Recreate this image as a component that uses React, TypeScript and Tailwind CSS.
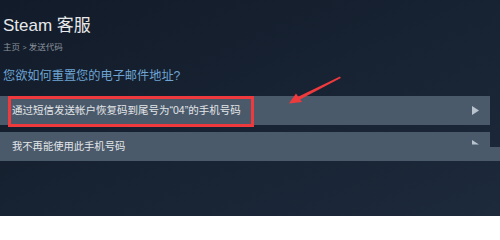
import React from 'react';

const font = "font-['Liberation_Sans','Noto_Sans_CJK_SC',sans-serif]";

function Triangle({ half = false }: { half?: boolean }) {
  return (
    <svg width="7" height="9" viewBox="0 0 7 9" className="shrink-0">
      {half ? (
        <polygon points="0,0 7,4.5 0,4.5" fill="#b9c3ce" />
      ) : (
        <polygon points="0,0 7,4.5 0,9" fill="#b9c3ce" />
      )}
    </svg>
  );
}

export default function App() {
  return (
    <div
      className={`relative w-[500px] h-[216px] overflow-hidden bg-gradient-to-br from-[#121b29] via-[#172232] to-[#1d2a3b] ${font}`}
    >
      {/* Header */}
      <div className="pl-[3px] pt-[16px]">
        <h1 className="text-[17px] leading-[20px] text-[#e6e8ea] font-normal">Steam 客服</h1>
        <div className="mt-[6px] text-[8.5px] leading-[10px] text-[#8a939c]">
          主页 <span className="text-[7px]">&gt;</span> 发送代码
        </div>
        <div className="mt-[16px] text-[12.2px] leading-[14px] text-[#6ea5d4]">
          您欲如何重置您的电子邮件地址?
        </div>
      </div>

      {/* Options */}
      <div className="mt-[13px] flex flex-col gap-[7px]">
        <div className="w-[490px] h-[29px] bg-[#4b5a6b] flex items-center justify-between pl-[12px] pr-[11px]">
          <span className="text-[10.5px] text-[#e3e6e9]">通过短信发送帐户恢复码到尾号为“04”的手机号码</span>
          <Triangle />
        </div>
        <div className="relative w-[490px] h-[29px] bg-[#4b5a6b] flex items-center justify-between pl-[12px] pr-[11px]">
          <span className="text-[10.3px] text-[#e3e6e9]">我不再能使用此手机号码</span>
          <div className="mt-[-4px]">
            <Triangle half />
          </div>
          {/* lower band of the row is shifted to full width */}
          <div className="absolute left-[440px] top-[15px] w-[60px] h-[14px] bg-[#4b5a6b]" />
        </div>
      </div>

      {/* Red annotation box */}
      <div className="absolute left-[8px] top-[96px] w-[246px] h-[31px] border-[3px] border-[#ee3a3d]" />

      {/* Red arrow */}
      <svg className="absolute left-0 top-0" width="500" height="216" viewBox="0 0 500 216">
        <polygon points="340,76.5 340.8,78 298,100.5 296.5,97.5" fill="#ee3a3d" />
        <polygon points="289,103.5 296,93.5 302,102" fill="#ee3a3d" />
      </svg>
    </div>
  );
}
